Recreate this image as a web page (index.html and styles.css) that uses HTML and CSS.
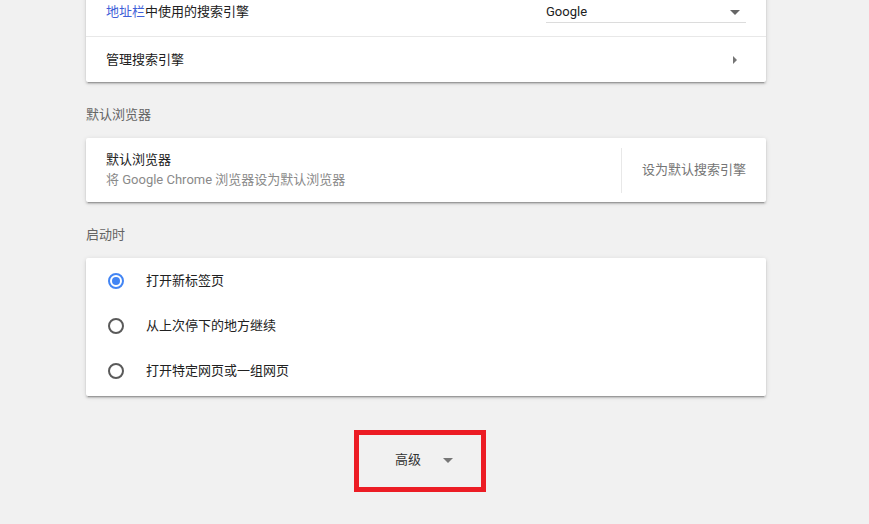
FILE: index.html
```html
<!DOCTYPE html>
<html lang="zh-CN">
<head>
    <meta charset="UTF-8">
    <meta name="viewport" content="width=device-width, initial-scale=1.0">
    <title>设置</title>
    <link rel="stylesheet" href="styles.css">
</head>
<body>
    <div class="page">
        <div class="card">
            <div class="row row-first">
                <div class="row-label"><a class="link" href="#">地址栏</a>中使用的搜索引擎</div>
                <div class="select">
                    <span>Google</span>
                    <span class="select-arrow"></span>
                </div>
            </div>
            <div class="row row-link">
                <div class="row-label">管理搜索引擎</div>
                <span class="sub-arrow"></span>
            </div>
        </div>

        <div class="section-title">默认浏览器</div>
        <div class="card">
            <div class="row row-two">
                <div class="row-text">
                    <div class="row-label">默认浏览器</div>
                    <div class="row-sub">将 Google Chrome 浏览器设为默认浏览器</div>
                </div>
                <div class="divider"></div>
                <div class="text-button">设为默认搜索引擎</div>
            </div>
        </div>

        <div class="section-title">启动时</div>
        <div class="card radio-card">
            <div class="radio-row">
                <span class="radio checked"></span>
                <span class="row-label">打开新标签页</span>
            </div>
            <div class="radio-row">
                <span class="radio"></span>
                <span class="row-label">从上次停下的地方继续</span>
            </div>
            <div class="radio-row">
                <span class="radio"></span>
                <span class="row-label">打开特定网页或一组网页</span>
            </div>
        </div>

        <div class="advanced">
            <div class="advanced-box">
                <span class="advanced-label">高级</span>
                <span class="advanced-arrow"></span>
            </div>
        </div>
    </div>
</body>
</html>
```

FILE: styles.css
```css
body {
    margin: 0;
    background-color: #f1f1f1;
    font-family: Roboto, "Noto Sans CJK SC", sans-serif;
    font-size: 13px;
    line-height: 20px;
    color: #212121;
}
.page {
    width: 680px;
    margin-left: 86px;
    margin-top: -12px;
}
.card {
    background-color: white;
    border-radius: 2px;
    box-shadow: 0 2px 2px 0 rgba(0,0,0,0.14), 0 1px 5px 0 rgba(0,0,0,0.12), 0 3px 1px -2px rgba(0,0,0,0.2);
}
.row {
    display: flex;
    align-items: center;
    padding: 0 20px;
}
.row-first {
    height: 48px;
    border-bottom: 1px solid #e8e8e8;
}
.row-link {
    height: 45px;
    justify-content: space-between;
}
.row-label {
    flex: 1;
}
.link {
    color: #3f5fd8;
    text-decoration: none;
}
.select {
    width: 200px;
    height: 20px;
    margin-top: 1px;
    display: flex;
    align-items: flex-start;
    justify-content: space-between;
    border-bottom: 1px solid #dcdcdc;
    color: #212121;
}
.select-arrow {
    width: 0;
    height: 0;
    margin: 8px 6px 0 0;
    border-left: 5px solid transparent;
    border-right: 5px solid transparent;
    border-top: 5px solid #666;
}
.sub-arrow {
    width: 0;
    height: 0;
    margin-right: 9px;
    border-top: 4px solid transparent;
    border-bottom: 4px solid transparent;
    border-left: 4px solid #757575;
}
.section-title {
    padding: 23px 0 13px;
    color: #646464;
}
.row-two {
    height: 64px;
}
.row-text {
    flex: 1;
    display: flex;
    flex-direction: column;
}
.row-sub {
    color: #8a8a8a;
}
.divider {
    width: 1px;
    height: 45px;
    background-color: #e8e8e8;
    margin-right: 20px;
}
.text-button {
    color: #757575;
}
.radio-card {
    padding: 0 0 3px;
}
.radio-row {
    height: 45px;
    display: flex;
    align-items: center;
    padding-left: 22px;
    gap: 22px;
}
.radio {
    box-sizing: border-box;
    width: 16px;
    height: 16px;
    border: 2px solid #5a5a5a;
    border-radius: 50%;
    display: flex;
    align-items: center;
    justify-content: center;
}
.radio.checked {
    border-color: #4285f4;
}
.radio.checked::after {
    content: "";
    width: 8px;
    height: 8px;
    border-radius: 50%;
    background-color: #4285f4;
}
.advanced {
    display: flex;
    justify-content: center;
    padding-top: 34px;
}
.advanced-box {
    margin-right: 12px;
    box-sizing: border-box;
    width: 132px;
    height: 62px;
    border: 5px solid #ec1c24;
    display: flex;
    align-items: center;
    padding: 0 0 3px 36px;
    gap: 22px;
}
.advanced-label {
    color: #333;
}
.advanced-arrow {
    width: 0;
    height: 0;
    margin-top: 2px;
    border-left: 5px solid transparent;
    border-right: 5px solid transparent;
    border-top: 5px solid #777;
}
```
